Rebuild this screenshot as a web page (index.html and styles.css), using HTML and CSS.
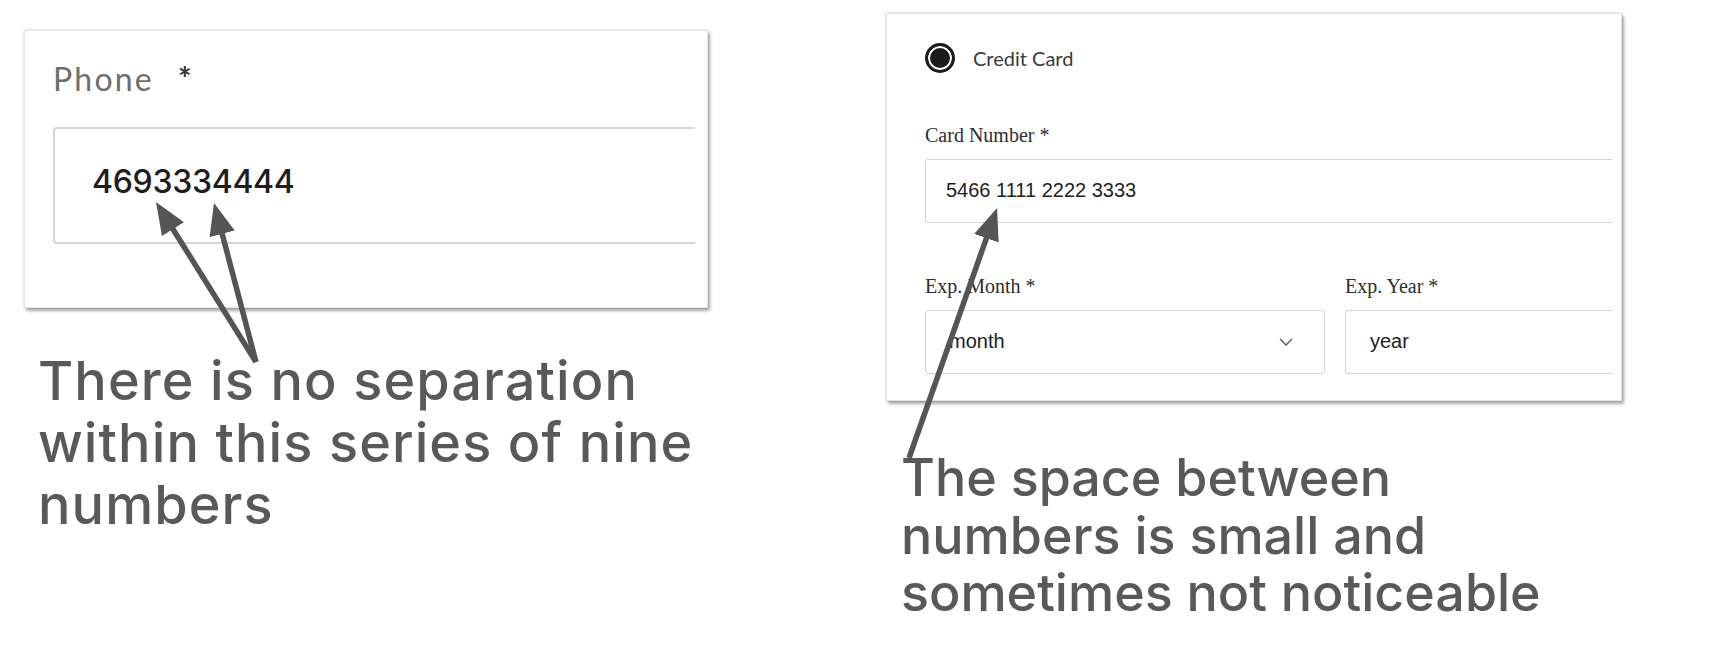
FILE: index.html
```html
<!DOCTYPE html>
<html lang="en">
<head>
<meta charset="utf-8">
<title>Number formatting issues</title>
<link rel="stylesheet" href="styles.css">
</head>
<body>
<div class="page">
  <section class="col col-left">
    <div class="card phone-card">
      <div class="phone-label">Phone<span class="req">*</span></div>
      <div class="phone-input">4693334444</div>
    </div>
    <p class="note note-left">There is no separation<br>within this series of nine<br>numbers</p>
  </section>

  <section class="col col-right">
    <div class="card pay-card">
      <div class="radio-row">
        <span class="radio"></span>
        <span class="radio-text">Credit Card</span>
      </div>
      <div class="field-label label-card">Card Number *</div>
      <div class="box box-card">5466 1111 2222 3333</div>
      <div class="exp-row">
        <div class="exp-col exp-month">
          <div class="field-label">Exp. Month *</div>
          <div class="box box-select">
            <span>month</span>
            <svg class="chev" width="14" height="8" viewBox="0 0 14 8"><polyline points="1,1 7,7 13,1" fill="none" stroke="#555" stroke-width="1.3"/></svg>
          </div>
        </div>
        <div class="exp-col exp-year">
          <div class="field-label">Exp. Year *</div>
          <div class="box box-year">year</div>
        </div>
      </div>
    </div>
    <p class="note note-right">The space between<br>numbers is small and<br>sometimes not noticeable</p>
  </section>

  <svg class="arrows" width="1712" height="646" viewBox="0 0 1712 646">
    <defs>
      <marker id="head" markerUnits="userSpaceOnUse" markerWidth="32" markerHeight="26" viewBox="0 0 32 26" refX="12" refY="13" orient="auto">
        <path d="M0,0 L32,13 L0,26 z" fill="#555"/>
      </marker>
    </defs>
    <line x1="256" y1="362" x2="166.6" y2="219" stroke="#555" stroke-width="5.5" marker-end="url(#head)"/>
    <line x1="256" y1="362" x2="219.1" y2="222.3" stroke="#555" stroke-width="5.5" marker-end="url(#head)"/>
    <line x1="909" y1="458" x2="990.4" y2="226.9" stroke="#555" stroke-width="5.5" marker-end="url(#head)"/>
  </svg>
</div>
</body>
</html>
```

FILE: styles.css
```css
* { box-sizing: border-box; }

html, body {
  margin: 0;
  padding: 0;
  background: #ffffff;
}

body {
  width: 1712px;
  height: 646px;
  overflow: hidden;
  font-family: "Lato", "Liberation Sans", sans-serif;
}

.page {
  position: relative;
  display: flex;
  gap: 178px;
  padding-left: 24px;
  height: 646px;
}

.col { display: flex; flex-direction: column; }
.col-left { width: 684px; padding-top: 30px; }
.col-right { width: 736px; padding-top: 13px; }

.card {
  background: #fff;
  border: 1px solid #e4e4e4;
  box-shadow: 0 0 2px rgba(0,0,0,0.22), 2px 3px 3px rgba(0,0,0,0.32);
}

/* ---------- phone card ---------- */
.phone-card {
  height: 278px;
  padding: 28px 0 0 28px;
}

.phone-label {
  font-family: "Lato", sans-serif;
  font-size: 32px;
  line-height: 40px;
  color: #6e6e6e;
  letter-spacing: 2.2px;
}

.phone-label .req {
  margin-left: 24px;
  color: #333;
  font-weight: 700;
}

.phone-input {
  margin-top: 28px;
  width: 642px;
  height: 117px;
  border: 2px solid #d6d6d6;
  border-right: none;
  border-radius: 4px 0 0 4px;
  padding: 33px 0 0 37px;
  font-family: "Inter", sans-serif;
  font-weight: 500;
  font-size: 32px;
  line-height: 40px;
  letter-spacing: -0.3px;
  color: #1e1e1e;
}

/* ---------- payment card ---------- */
.pay-card {
  height: 388px;
  padding: 29px 0 0 38px;
}

.radio-row {
  display: flex;
  align-items: center;
  gap: 18px;
  height: 30px;
}

.radio {
  width: 30px;
  height: 30px;
  border-radius: 50%;
  border: 3px solid #1c1c1c;
  background: #1c1c1c;
  box-shadow: inset 0 0 0 2px #fff;
}

.radio-text {
  font-family: "Lato", sans-serif;
  font-size: 20px;
  color: #3a3a3a;
}

.field-label {
  font-family: "Liberation Serif", serif;
  font-size: 20px;
  line-height: 24px;
  color: #2e2e2e;
}

.label-card { margin-top: 50px; }

.box {
  display: flex;
  align-items: center;
  height: 64px;
  border: 1px solid #d4d4d4;
  border-radius: 3px;
  font-family: "Liberation Sans", sans-serif;
  font-size: 20px;
  color: #1e1e1e;
  padding-bottom: 2px;
}

.box-card {
  margin-top: 12px;
  width: 687px;
  padding-left: 20px;
  border-right: none;
  border-radius: 3px 0 0 3px;
}

.exp-row {
  display: flex;
  gap: 20px;
  margin-top: 51px;
}

.exp-col .box { margin-top: 12px; }

.exp-month { width: 400px; }
.exp-year { width: 267px; }

.box-select {
  justify-content: space-between;
  padding-left: 23px;
  padding-right: 31px;
}

.chev { display: block; margin-top: 2px; }

.box-year {
  padding-left: 24px;
  border-right: none;
  border-radius: 3px 0 0 3px;
}

/* ---------- annotations ---------- */
.note {
  margin: 0;
  font-family: "Inter", sans-serif;
  font-weight: 500;
  color: #595959;
}

.note-left {
  margin-top: 42px;
  margin-left: 14px;
  font-size: 54px;
  line-height: 62px;
  letter-spacing: 1.1px;
}

.note-right {
  margin-top: 48px;
  margin-left: 15px;
  font-size: 52px;
  line-height: 57.5px;
}

.arrows {
  position: absolute;
  left: 0;
  top: 0;
  pointer-events: none;
}
```
